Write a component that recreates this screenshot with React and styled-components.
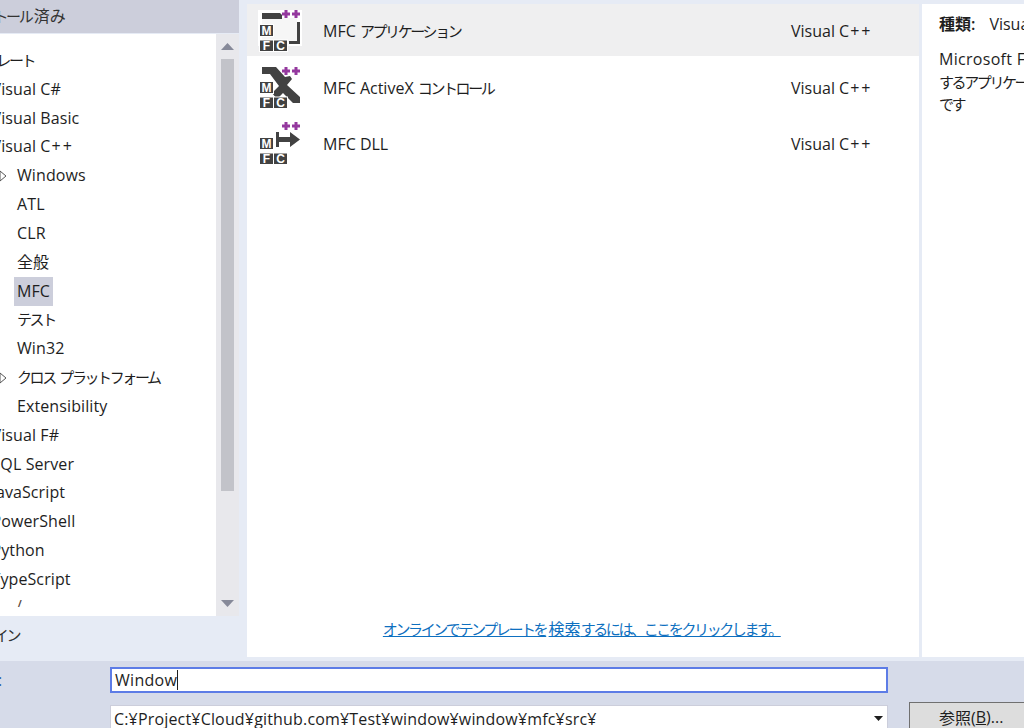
import React from 'react'
import styled, { createGlobalStyle } from 'styled-components'

const Global = createGlobalStyle`
  html, body { margin: 0; padding: 0; height: 100%; overflow: hidden; }
  body {
    font-family: "Open Sans", "Noto Sans CJK JP", sans-serif;
    font-size: 16px;
    color: #1e1e1e;
    background: #e6ebf5;
  }
`

const Page = styled.div`
  width: 1024px;
  height: 728px;
  display: flex;
  flex-direction: column;
  overflow: hidden;
`
const Main = styled.div`
  height: 657px;
  display: flex;
  flex: none;
  background: #e6ebf5;
`
const Left = styled.div`
  width: 239px;
  margin-right: 8px;
  display: flex;
  flex-direction: column;
  flex: none;
`
const LeftHeader = styled.div`
  height: 33px;
  flex: none;
  margin-bottom: 1px;
  padding-bottom: 3px;
  box-sizing: border-box;
  background: #ccceDb;
  display: flex;
  align-items: center;
  overflow: hidden;
  white-space: nowrap;
  color: #333;
`
const Clipped = styled.span`
  margin-left: ${p => p.$left}px;
`
const TreeWrap = styled.div`
  height: 582px;
  flex: none;
  display: flex;
`
const Tree = styled.div`
  width: 216px;
  flex: none;
  background: #fff;
  overflow: hidden;
  padding-top: 12px;
  box-sizing: border-box;
`
const Item = styled.div`
  height: 28.83px;
  display: flex;
  align-items: center;
  white-space: nowrap;
  margin-left: ${p => p.$left}px;
  position: relative;
`
const CutItem = styled.div`
  height: 13px;
  overflow: hidden;
  line-height: 24px;
  margin-left: 16px;
  color: #5a4a40;
`
const Label = styled.span`
  padding: 0 3px;
  line-height: 29px;
  letter-spacing: 0.1px;
  background: ${p => (p.$selected ? '#ccceDb' : 'transparent')};
`
const Kana = styled.span`
  font-size: 15px;
  letter-spacing: -2.4px;
  word-spacing: 3px;
  margin-right: 2.4px;
`
const Wide = styled.span`
  margin-left: 1px;
  letter-spacing: 2px;
  margin-right: -2px;
`
const Expander = styled.svg`
  position: absolute;
  left: -15px;
  top: 9px;
  width: 11px;
  height: 12px;
`
const Scroll = styled.div`
  width: 23px;
  flex: none;
  background: #e8e8ec;
  display: flex;
  flex-direction: column;
  align-items: center;
  box-sizing: border-box;
`
const ScrollArrow = styled.svg`
  width: 13px;
  height: 7px;
  flex: none;
  margin: ${p => p.$margin};
`
const Thumb = styled.div`
  width: 13px;
  height: 432px;
  flex: none;
  background: #c2c3c9;
`
const LeftFooter = styled.div`
  height: 41px;
  padding-bottom: 3px;
  box-sizing: border-box;
  display: flex;
  align-items: center;
  overflow: hidden;
  white-space: nowrap;
  color: #333;
`
const Center = styled.div`
  width: 672px;
  height: 653px;
  margin-top: 4px;
  flex: none;
  background: #fff;
  display: flex;
  flex-direction: column;
`
const Row = styled.div`
  height: ${p => (p.$first ? 52 : 56)}px;
  display: flex;
  align-items: center;
  flex: none;
  background: ${p => (p.$active ? '#efeff0' : '#fff')};
  margin-bottom: ${p => (p.$first ? 3 : 0)}px;
`
const IconSvg = styled.svg`
  width: 50px;
  height: 50px;
  margin-left: 8px;
  flex: none;
`
const RowName = styled.div`
  margin-left: 18px;
  padding-top: 2px;
  width: 468px;
  white-space: nowrap;
`
const RowLang = styled.div`
  padding-top: 2px;
  white-space: nowrap;
`
const Spacer = styled.div`
  flex: 1;
`
const OnlineLink = styled.a`
  align-self: center;
  margin-bottom: 17px;
  color: #0e70c0;
  text-decoration: underline;
  white-space: nowrap;
`
const Info = styled.div`
  margin-left: 3px;
  margin-top: 4px;
  width: 102px;
  height: 653px;
  background: #fff;
  padding: 9px 0 0 17px;
  box-sizing: border-box;
  overflow: hidden;
  flex: none;
  white-space: nowrap;
`
const InfoType = styled.div`
  line-height: 22px;
  margin-bottom: 13px;
`
const InfoLine = styled.div`
  line-height: 22.5px;
  letter-spacing: 0.3px;
`
const Strong = styled.span`
  font-weight: 600;
  margin-right: 14px;
`
const Bottom = styled.div`
  flex: 1;
  margin-top: 4px;
  background: #d6dbe9;
  position: relative;
  display: grid;
  grid-template-columns: 110px 778px 21px 115px;
  grid-template-rows: 26px 23px;
  row-gap: 12px;
  padding-top: 6px;
  overflow: hidden;
`
const FieldLabel = styled.div`
  display: flex;
  align-items: center;
  overflow: hidden;
  white-space: nowrap;
  color: #2f5fa8;
`
const NameInput = styled.div`
  grid-column: 2;
  box-sizing: border-box;
  border: 2px solid #5d7ce6;
  background: #fff;
  display: flex;
  align-items: center;
  padding-left: 3px;
  letter-spacing: 0.3px;
  white-space: nowrap;
`
const Caret = styled.span`
  width: 1px;
  height: 20px;
  background: #1e1e1e;
`
const Combo = styled.div`
  grid-column: 2;
  grid-row: 2;
  box-sizing: border-box;
  height: 27px;
  border: 1px solid #ccceDb;
  background: #fff;
  display: flex;
  align-items: center;
  justify-content: space-between;
  padding: 0 4px 0 3px;
  letter-spacing: 0.17px;
  white-space: nowrap;
`
const ComboArrow = styled.svg`
  width: 9px;
  height: 5px;
`
const BrowseButton = styled.div`
  grid-column: 4;
  grid-row: 2;
  margin-top: -3px;
  width: 140px;
  height: 30px;
  box-sizing: border-box;
  border: 1px solid #707070;
  background: #dddddd;
  display: flex;
  align-items: center;
  padding-left: 29px;
  white-space: nowrap;
`

const Badges = () => (
  <>
    <rect x="4" y="19" width="15" height="13" fill="#fff" />
    <rect x="4" y="34.500" width="29" height="12.500" fill="#fff" />
    <rect x="5" y="20" width="13" height="11" fill="#424242" />
    <rect x="5" y="35.500" width="13" height="10.500" fill="#424242" />
    <rect x="19" y="35.500" width="13" height="10.500" fill="#424242" />
    <text x="11.5" y="29.5" textAnchor="middle" fontSize="12" fontWeight="700" fill="#fff" fontFamily="Liberation Sans">M</text>
    <text x="11.5" y="45" textAnchor="middle" fontSize="12" fontWeight="700" fill="#fff" fontFamily="Liberation Sans">F</text>
    <text x="25.5" y="45" textAnchor="middle" fontSize="12" fontWeight="700" fill="#fff" fontFamily="Liberation Sans">C</text>
  </>
)
const Plus = ({ y }) => (
  <path
    d={`M27 ${y + 2.5}h2.500v-2.500h3v2.500h2.500v3h-2.500v2.500h-3v-2.500h-2.500zM37 ${y + 2.5}h2.500v-2.500h3v2.500h2.500v3h-2.500v2.500h-3v-2.500h-2.500z`}
    fill="#94399e"
  />
)

const AppIcon = () => (
  <IconSvg viewBox="0 0 50 50">
    <rect x="3" y="5" width="44" height="36" fill="#fff" />
    <rect x="7" y="13" width="35" height="24" fill="#f6f6f6" />
    <path d="M7 8h18l2 2v4h-20z" fill="#424242" />
    <path d="M42 17h3v22h-11v-3h8z" fill="#424242" />
    <Badges />
    <Plus y={5} />
  </IconSvg>
)
const ActiveXIcon = () => (
  <IconSvg viewBox="0 0 50 50">
    <path d="M7 5h14l9 10 5-1 2 3-5 6 13 12v6h-7l-10-10-6 6-5-6 7-7-9-12h-8z" fill="#424242" />
    <Badges />
    <Plus y={5} />
  </IconSvg>
)
const DllIcon = () => (
  <IconSvg viewBox="0 0 50 50">
    <path d="M21 14h3v5h11v-5l10 7.500-10 7.500v-5h-11v5h-3z" fill="#424242" />
    <Badges />
    <Plus y={4} />
  </IconSvg>
)

const Arrow = () => (
  <Expander viewBox="0 0 11 12">
    <path d="M1 1l6 5-6 5z" fill="none" stroke="#555" />
  </Expander>
)

const items = [
  { left: -44, text: <Kana>テンプレート</Kana> },
  { left: -11.5, text: 'Visual C#' },
  { left: -11.5, text: 'Visual Basic' },
  { left: -11.5, text: <>Visual C<Wide>++</Wide></> },
  { left: 14, text: 'Windows', arrow: true },
  { left: 14, text: 'ATL' },
  { left: 14, text: 'CLR' },
  { left: 14, text: '全般' },
  { left: 14, text: 'MFC', selected: true },
  { left: 14, text: <Kana>テスト</Kana> },
  { left: 14, text: 'Win32' },
  { left: 14, text: <Kana>クロス プラットフォーム</Kana>, arrow: true },
  { left: 14, text: 'Extensibility' },
  { left: -11.5, text: 'Visual F#' },
  { left: -11.5, text: 'SQL Server' },
  { left: -11.5, text: 'JavaScript' },
  { left: -11.5, text: 'PowerShell' },
  { left: -11.5, text: 'Python' },
  { left: -11.5, text: 'TypeScript' },
]

const App = () => (
  <Page>
    <Global />
    <Main>
      <Left>
        <LeftHeader>
          <Clipped $left={-44}><Kana>インストール</Kana>済み</Clipped>
        </LeftHeader>
        <TreeWrap>
          <Tree>
            {items.map((it, i) => (
              <Item key={i} $left={it.left}>
                {it.arrow && <Arrow />}
                <Label $selected={it.selected}>{it.text}</Label>
              </Item>
            ))}
            <CutItem>/</CutItem>
          </Tree>
          <Scroll>
            <ScrollArrow $margin="9px 0 9px" viewBox="0 0 13 7"><path d="M6.5 0l6.500 7h-13z" fill="#868999" /></ScrollArrow>
            <Thumb />
            <ScrollArrow $margin="109px 0 0" viewBox="0 0 13 7"><path d="M0 0h13l-6.500 7z" fill="#868999" /></ScrollArrow>
          </Scroll>
        </TreeWrap>
        <LeftFooter>
          <Clipped $left={-44}><Kana>オンライン</Kana></Clipped>
        </LeftFooter>
      </Left>
      <Center>
        <Row $first $active>
          <AppIcon />
          <RowName>MFC <Kana>アプリケーション</Kana></RowName>
          <RowLang>Visual C<Wide>++</Wide></RowLang>
        </Row>
        <Row>
          <ActiveXIcon />
          <RowName>MFC ActiveX <Kana>コントロール</Kana></RowName>
          <RowLang>Visual C<Wide>++</Wide></RowLang>
        </Row>
        <Row>
          <DllIcon />
          <RowName>MFC DLL</RowName>
          <RowLang>Visual C<Wide>++</Wide></RowLang>
        </Row>
        <Spacer />
        <OnlineLink><Kana>オンラインでテンプレートを</Kana>検索<Kana>するには、ここをクリックします。</Kana></OnlineLink>
      </Center>
      <Info>
        <InfoType><Strong>種類:</Strong>Visual C++</InfoType>
        <InfoLine>Microsoft Foundation</InfoLine>
        <InfoLine><Kana>するアプリケーション</Kana></InfoLine>
        <InfoLine><Kana>です</Kana></InfoLine>
      </Info>
    </Main>
    <Bottom>
      <FieldLabel><Clipped $left={-2}>:</Clipped></FieldLabel>
      <NameInput>Window<Caret /></NameInput>
      <Combo>
        C:¥Project¥Cloud¥github.com¥Test¥window¥window¥mfc¥src¥
        <ComboArrow viewBox="0 0 9 5"><path d="M0 0h9l-4.500 5z" fill="#1e1e1e" /></ComboArrow>
      </Combo>
      <BrowseButton>参照(<u>B</u>)...</BrowseButton>
    </Bottom>
  </Page>
)

export default App
